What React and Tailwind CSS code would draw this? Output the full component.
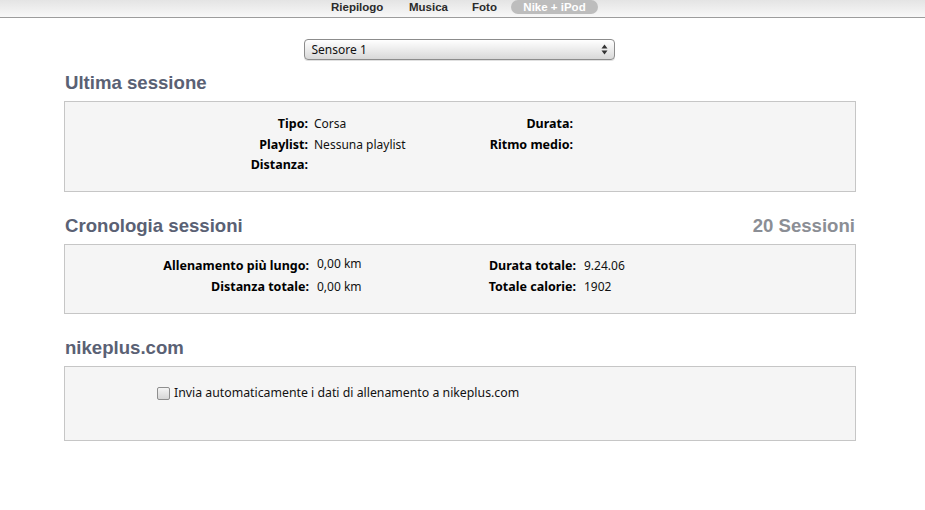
import React from "react";

const body = { fontFamily: '"Noto Sans", "Open Sans", sans-serif' };
const arial = { fontFamily: '"Liberation Sans", Arial, sans-serif' };

const Row = ({ label, value }) => (
  <>
    <div className="text-right font-bold text-[12.5px] text-black">{label}</div>
    <div className="text-[#111]">{value}</div>
  </>
);

const Heading = ({ children, right }) => (
  <div className="flex items-end justify-between h-[18px] leading-[18px]" style={arial}>
    <h2 className="text-[18.6px] font-bold text-[#5a6174]">{children}</h2>
    {right && <span className="text-[18.6px] font-bold text-[#8b8e95] pr-[1px]">{right}</span>}
  </div>
);

const App = () => {
  return (
    <div className="w-[925px] h-[510px] bg-white overflow-hidden" style={body}>
      {/* tab bar */}
      <div className="h-[18px] border-b border-[#9c9c9c] bg-gradient-to-b from-[#e4e4e4] to-[#f8f8f8] flex items-start pl-[331px]" style={arial}>
        <div className="flex items-center text-[11.5px] font-bold text-[#2b2b2b] leading-[14px]">
          <span className="w-[52px] text-center">Riepilogo</span>
          <span className="ml-[26px] w-[39px] text-center">Musica</span>
          <span className="ml-[24px] w-[25px] text-center">Foto</span>
          <span className="ml-[14px] w-[87px] text-center h-[14px] rounded-full bg-[#bdbdbd] text-white">Nike + iPod</span>
        </div>
      </div>

      <div className="ml-[64px] w-[792px]">
        {/* select */}
        <div className="flex justify-center mt-[21px] pr-[2px]">
          <div className="w-[311px] h-[21px] rounded-[4px] border border-[#8c8c8c] bg-gradient-to-b from-[#ffffff] via-[#ececec] to-[#d8d8d8] flex items-center justify-between pl-[7px] pr-[6px] text-[12px] text-[#111] shadow-[0_1px_0_#e0e0e0]">
            <span>Sensore 1</span>
            <svg width="7" height="11" viewBox="0 0 7 11">
              <path d="M3.5 0.5 L6.5 4.5 L0.5 4.5 Z" fill="#333" />
              <path d="M3.5 10.5 L6.5 6.5 L0.5 6.5 Z" fill="#333" />
            </svg>
          </div>
        </div>

        {/* Ultima sessione */}
        <div className="mt-[14px] pl-[1px]">
          <Heading>Ultima sessione</Heading>
        </div>
        <div className="mt-[9px] h-[91px] border border-[#c6c6c6] bg-[#f5f5f5] pt-[12px] text-[12px]">
          <div className="grid grid-cols-[243px_155px_98px_1fr] gap-x-[6px] leading-[20.5px]">
            <Row label="Tipo:" value="Corsa" />
            <Row label="Durata:" value="" />
            <Row label="Playlist:" value="Nessuna playlist" />
            <Row label="Ritmo medio:" value="" />
            <Row label="Distanza:" value="" />
          </div>
        </div>

        {/* Cronologia sessioni */}
        <div className="mt-[25px] pl-[1px]">
          <Heading right="20 Sessioni">Cronologia sessioni</Heading>
        </div>
        <div className="mt-[9px] h-[70px] border border-[#c6c6c6] bg-[#f5f5f5] pt-[10px] text-[12px]">
          <div className="grid grid-cols-[244px_158px_93px_1fr] gap-x-[8px] leading-[21px]">
            <Row label="Allenamento più lungo:" value={<span className="relative -top-[2px]">0,00 km</span>} />
            <Row label="Durata totale:" value="9.24.06" />
            <Row label="Distanza totale:" value="0,00 km" />
            <Row label="Totale calorie:" value="1902" />
          </div>
        </div>

        {/* nikeplus.com */}
        <div className="mt-[25px] pl-[1px]">
          <Heading>nikeplus.com</Heading>
        </div>
        <div className="mt-[9px] h-[75px] border border-[#c6c6c6] bg-[#f5f5f5] pt-[19px] pl-[92px] text-[12.3px]">
          <label className="flex items-center gap-[4px] leading-[14px] text-[#111]">
            <span className="w-[13px] h-[13px] rounded-[2px] border border-[#8e8e8e] bg-gradient-to-b from-[#f4f4f4] to-[#d6d6d6]" />
            <span>Invia automaticamente i dati di allenamento a nikeplus.com</span>
          </label>
        </div>
      </div>
    </div>
  );
};

export default App;
